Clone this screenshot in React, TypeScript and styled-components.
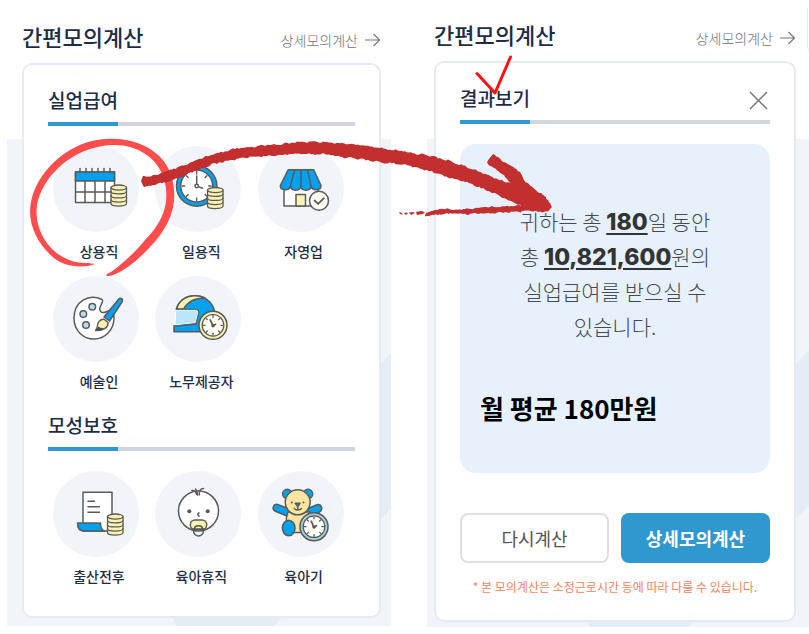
import React from "react";
import styled, { createGlobalStyle, css } from "styled-components";

const color = {
  navy: "#1c2d44",
  text: "#454a52",
  muted: "#737373",
  blue: "#2f98ce",
  track: "#d0d6dd",
  border: "#e5ebf3",
  backdrop: "#f1f5fa",
  band: "#e4edf5",
  result: "#e6f1fc",
  notice: "#f28560",
  brush: "#c32f2f",
  iconBlue: "#00a2f0",
  iconYellow: "#fbf2b2",
  iconLine: "#5a5a5a",
};

const GlobalStyle = createGlobalStyle`
  *, *::before, *::after { box-sizing: border-box; }
  body {
    margin: 0;
    background: #fff;
    color: ${color.text};
    font-family: "Noto Sans CJK KR", "Noto Sans", sans-serif;
  }
  h2, h3, p, ul { margin: 0; padding: 0; }
  button { font-family: inherit; padding: 0; cursor: pointer; }
`;

const Page = styled.main`
  position: relative;
  display: grid;
  grid-template-columns: 384fr 382fr;
  column-gap: 36px;
  align-items: start;
  min-height: 100vh;
  padding-left: 7px;
  overflow: hidden;
`;

const Panel = styled.section<{ $wide?: boolean }>`
  position: relative;
  overflow: hidden;
  padding: ${(p) => (p.$wide ? "19px 13px 5px 7px" : "21px 10px 8px 15px")};
  background: linear-gradient(#fff 139px, ${color.backdrop} 139px);

  &::before {
    content: "";
    position: absolute;
    left: ${(p) => (p.$wide ? "156px" : "162px")};
    bottom: -27px;
    width: 500px;
    height: 110px;
    border-radius: 55px;
    background: ${color.band};
    transform: rotate(-45deg);
    transform-origin: 55px 55px;
  }
`;

const PanelHead = styled.header`
  position: relative;
  display: flex;
  justify-content: space-between;
  align-items: flex-end;
  margin-bottom: 12px;
`;

const PanelTitle = styled.h2`
  font-size: 22px;
  line-height: 30px;
  font-weight: 500;
  color: ${color.navy};
`;

const DetailLink = styled.a`
  display: flex;
  align-items: center;
  gap: 6px;
  font-size: 14px;
  line-height: 22px;
  font-weight: 300;
  color: ${color.muted};
  text-decoration: none;
`;

const Card = styled.div<{ $bottom: number }>`
  position: relative;
  padding: 23px 24px ${(p) => p.$bottom}px;
  border: 2px solid ${color.border};
  border-radius: 10px;
  background: #fff;
`;

const SectionHead = styled.div<{ $spaced?: boolean }>`
  display: flex;
  justify-content: space-between;
  align-items: flex-start;
  margin-top: ${(p) => (p.$spaced ? "23px" : "0")};
  margin-bottom: 20px;
  background: linear-gradient(${color.track}, ${color.track}) bottom / 100% 4px no-repeat;
`;

const SectionTitle = styled.h3`
  padding-bottom: 10px;
  border-bottom: 4px solid ${color.blue};
  font-size: 19px;
  line-height: 24px;
  font-weight: 500;
  color: ${color.navy};
`;

const CloseButton = styled.button`
  display: flex;
  margin-top: 4px;
  border: 0;
  background: none;
`;

const JobGrid = styled.ul`
  display: grid;
  grid-template-columns: repeat(3, 1fr);
  row-gap: 16px;
  list-style: none;
`;

const JobButton = styled.button`
  display: flex;
  flex-direction: column;
  gap: 10px;
  width: 92px;
  margin-left: 5px;
  border: 0;
  background: none;
`;

const JobIcon = styled.svg`
  display: block;
  width: 86px;
  height: 86px;
  border-radius: 50%;
  background: ${color.backdrop};
`;

const JobLabel = styled.span`
  align-self: stretch;
  font-size: 14px;
  line-height: 18px;
  font-weight: 500;
  color: ${color.navy};
  text-align: center;
`;

const ResultBox = styled.div`
  padding: 60px 20px 45px;
  border-radius: 16px;
  background: ${color.result};
`;

const ResultText = styled.p`
  font-size: 21px;
  line-height: 35px;
  font-weight: 300;
  text-align: center;
`;

const Figure = styled.strong`
  font-family: Inter, sans-serif;
  font-size: 23px;
  line-height: 20px;
  font-weight: 800;
  color: #333;
  text-decoration: underline;
  text-decoration-thickness: 2px;
  text-underline-offset: 3px;
`;

const Average = styled.p`
  margin-top: 46px;
  margin-bottom: 2px;
  font-size: 26px;
  line-height: 36px;
  font-weight: 700;
  color: #000;
`;

const Actions = styled.div`
  display: grid;
  grid-template-columns: 1fr 1fr;
  column-gap: 12px;
  margin-top: 40px;
`;

const ActionButton = styled.button<{ $primary?: boolean }>`
  height: 50px;
  border-radius: 8px;
  font-size: 18px;
  ${(p) =>
    p.$primary
      ? css`
          border: 0;
          background: ${color.blue};
          color: #fff;
          font-weight: 700;
        `
      : css`
          border: 2px solid #dde1e7;
          background: #fff;
          color: #555;
          font-weight: 400;
        `}
`;

const Notice = styled.p`
  margin-top: 15px;
  font-size: 12px;
  line-height: 18px;
  color: ${color.notice};
  text-align: center;
  white-space: nowrap;
`;

const NextCardEdge = styled.div`
  position: absolute;
  top: 8px;
  right: -20px;
  width: 22px;
  height: 46px;
  border-left: 1px solid ${color.border};
  border-bottom: 1px solid ${color.border};
  border-bottom-left-radius: 8px;
`;

const Markup = styled.svg`
  position: absolute;
  top: 0;
  left: 0;
  pointer-events: none;
`;

const line = {
  stroke: color.iconLine,
  strokeWidth: 1.5,
  strokeLinejoin: "round" as const,
  strokeLinecap: "round" as const,
};

function Coins({ x, y }: { x: number; y: number }) {
  return (
    <g transform={`translate(${x} ${y})`} {...line} strokeWidth="1.3">
      <path d="M0 2.500v16c0 3.500 15.500 3.500 15.500 0v-16z" fill={color.iconYellow} />
      <ellipse cx="7.750" cy="2.600" rx="7.750" ry="2.600" fill={color.iconYellow} />
      <path d="M0 6.600c0 3 15.500 3 15.500 0M0 10.700c0 3 15.500 3 15.500 0M0 14.800c0 3 15.500 3 15.500 0" fill="none" />
    </g>
  );
}

function Dial({ x, y, ring }: { x: number; y: number; ring: string }) {
  return (
    <g transform={`translate(${x} ${y})`} {...line}>
      <circle r="14" fill={ring} />
      <circle r="10.8" fill="#fffdf4" strokeWidth="1.2" />
      {[0, 45, 90, 135, 180, 225, 270, 315].map((a) => (
        <path key={a} d="M0-9.8v1.8" transform={`rotate(${a})`} strokeWidth="1.3" />
      ))}
      <path d="M-2.8-5.5L0 .6L2.5-1" fill="none" strokeWidth="1.7" />
      <circle r="1" cy=".4" fill={color.iconLine} />
    </g>
  );
}

const icons: Record<string, React.ReactNode> = {
  calendar: (
    <>
      <path d="M22.500 26h39v30.500h-39z" fill="#fff" {...line} />
      <path d="M22.500 26h39v9h-39z" fill={color.iconBlue} {...line} />
      <path
        d="M32 35v21.500M42 35v21.500M52 35v21.500M23 46h38M27 22.500v4M33 22.500v4M39 22.500v4M45 22.500v4M51 22.500v4M57 22.500v4"
        fill="none"
        {...line}
      />
      <Coins x={58} y={39} />
    </>
  ),
  clock: (
    <>
      <circle cx="41.700" cy="40" r="20.200" fill={color.iconBlue} {...line} />
      <circle cx="41.700" cy="40" r="16" fill="#fff" {...line} />
      {[0, 45, 90, 135, 180, 225, 270, 315].map((a) => (
        <path key={a} d="M41.700 25.500v2.500" transform={`rotate(${a} 41.7 40)`} {...line} strokeWidth="1.3" />
      ))}
      <path d="M41.700 30v8.500M43.500 40.600l4 1.600" fill="none" {...line} />
      <circle cx="41.700" cy="40" r="1.700" fill="#fff" {...line} />
      <Coins x={52.5} y={41.5} />
    </>
  ),
  store: (
    <>
      <path d="M26 39h34v21H26z" fill="#fff" {...line} />
      <path d="M38 48.500h9.500V60H38z" fill={color.iconYellow} {...line} />
      <path
        d="M30.300 23.700h25.400L63 39.500c0 5.500-9 5.500-10 .5c0 5.500-10 5.500-10.300 0c-.3 5.500-10 5.500-10.200 0c-1 5-10.200 5-10.200-.5z"
        fill={color.iconBlue}
        {...line}
      />
      <path d="M36.700 23.700L32.500 40M43 23.700V40M49.300 23.700L53 40" fill="none" {...line} />
      <circle cx="61" cy="54.700" r="9.500" fill="#fffdf4" {...line} />
      <path d="M56.500 54.500l3.600 3.400l5.800-5.800" fill="none" {...line} strokeWidth="1.8" />
    </>
  ),
  palette: (
    <>
      <path
        d="M49 23.500C36 17.500 21 25 21 42c0 12.500 9 21 20 21s20-9 20-21c0-6-3-8.500-7-6.500c-6 3-9-1-6-6.500c1.500-3 2.500-4.500 1-5.500z"
        fill="#fff"
        {...line}
      />
      <g fill="#b5dff3" {...line}>
        <circle cx="39.300" cy="30.700" r="3.300" />
        <circle cx="30.300" cy="38" r="3.300" />
        <circle cx="33" cy="49" r="3.300" />
      </g>
      <path d="M65.800 23c1.800-1.800 4.800 0 3.200 3L56.500 45L51 41z" fill={color.iconBlue} {...line} />
      <path d="M51.500 43.500l3.500 3c.5 5-4.500 8-12.500 8c3-2 1-7 3.500-9c1.500-1.500 3.500-2.500 5.500-2z" fill={color.iconYellow} {...line} />
      <path d="M42 54.800c3-1.500 2.500-4.500 4-4c1 1.500 2.500.5 4.500 2c-2 1.500-5 2.200-8.500 2z" fill="#4d4d4d" />
    </>
  ),
  helmet: (
    <>
      <path
        d="M21.500 33C24 24 32 19.500 40.500 19.700C52 20 60 29 60 40v15.700H19V50l22-2l2.500-12z"
        fill={color.iconBlue}
        {...line}
      />
      <path d="M21.500 33C24 24 32 19.500 40.500 19.700c4 0 7 1 9.500 2.300c-9 0-17 3-21.500 11z" fill={color.iconYellow} {...line} />
      <path d="M20.700 34h19c3 0 3.500 1 3 4l-2.200 9l-20.500 2z" fill="#b9e7f8" stroke="#fff" strokeWidth="1" />
      <path d="M21 33.300h18.500c4 0 4.500 2 3.800 5l-2.300 9.200L19 50" fill="none" {...line} strokeWidth="1" />
      <Dial x={58} y={49.3} ring={color.iconYellow} />
    </>
  ),
  document: (
    <>
      <path d="M30 21.300h29V60H30z" fill="#fff" {...line} />
      <path d="M35 30.300h6.500M35 35.700h11.500M35 41.300h11.500" fill="none" {...line} />
      <path d="M24.500 52H47.500c0 4 1 7 4 8H31c-5 0-6.500-4-6.500-8z" fill={color.iconBlue} {...line} />
      <Coins x={54.5} y={43} />
    </>
  ),
  baby: (
    <>
      <circle cx="43.500" cy="40" r="20" fill="#fff" {...line} />
      <circle cx="34.300" cy="40.300" r="2" fill={color.iconLine} />
      <circle cx="52.700" cy="40.300" r="2" fill={color.iconLine} />
      <path
        d="M44 41.800c-1.500 1-1.500 2.500 0 3.500M37 19.500c2.500-.5 4 1 4.500 4M40.500 18c1.500 1.500 2 3.500 1.800 6M48.500 17.500c-3 0-4.500 2.500-4.300 6.500"
        fill="none"
        {...line}
      />
      <rect x="35.300" y="49" width="16.400" height="9.500" rx="4.700" fill={color.iconYellow} {...line} />
      <circle cx="43.500" cy="60" r="5" fill="none" {...line} />
      <path d="M39.500 58c0-4.500 8-4.500 8 0z" fill={color.iconYellow} {...line} />
    </>
  ),
  bear: (
    <>
      <g fill={color.iconBlue} {...line}>
        <circle cx="29.300" cy="23" r="4.700" />
        <circle cx="50" cy="23" r="4.700" />
        <path d="M19.500 33.500l12 4.500l-1.500 7.500l-13-5.500c-3.500-2-1.500-7.500 2.500-6.500z" />
        <path d="M59.500 33.500L48 38.500l2 6.500l11.500-4c4-2 2-8-2-7.500z" />
      </g>
      <path d="M30 41c-3 8-2 15 1 20.500h17l4-20.500z" fill="#fbe5a0" {...line} />
      <circle cx="39.700" cy="31.300" r="12.500" fill="#fbe5a0" {...line} />
      <circle cx="33.800" cy="31.500" r="1" fill={color.iconLine} />
      <circle cx="45.500" cy="31.500" r="1" fill={color.iconLine} />
      <path d="M37.300 32.300h4.800l-2.400 3.200z" fill={color.iconBlue} {...line} />
      <path d="M39.700 35.500v3M36.300 37.500c1 2 6 2 7 0" fill="none" {...line} />
      <ellipse cx="30.700" cy="57" rx="6.300" ry="7.700" fill={color.iconBlue} {...line} />
      <Dial x={56} y={55.7} ring="#9fd0de" />
    </>
  ),
};

type Job = { icon: string; label: string };

const unemployment: Job[] = [
  { icon: "calendar", label: "상용직" },
  { icon: "clock", label: "일용직" },
  { icon: "store", label: "자영업" },
  { icon: "palette", label: "예술인" },
  { icon: "helmet", label: "노무제공자" },
];

const maternity: Job[] = [
  { icon: "document", label: "출산전후" },
  { icon: "baby", label: "육아휴직" },
  { icon: "bear", label: "육아기" },
];

function JobList({ jobs }: { jobs: Job[] }) {
  return (
    <JobGrid>
      {jobs.map((job) => (
        <li key={job.label}>
          <JobButton type="button">
            <JobIcon viewBox="0 0 86 86" aria-hidden="true">
              {icons[job.icon]}
            </JobIcon>
            <JobLabel>{job.label}</JobLabel>
          </JobButton>
        </li>
      ))}
    </JobGrid>
  );
}

function Head() {
  return (
    <PanelHead>
      <PanelTitle>간편모의계산</PanelTitle>
      <DetailLink href="#detail">
        상세모의계산
        <svg width="17" height="14" viewBox="0 0 17 14" fill="none" stroke="#777" strokeWidth="1.2" aria-hidden="true">
          <path d="M1 7h14.500M9.500 1l6 6l-6 6" />
        </svg>
      </DetailLink>
    </PanelHead>
  );
}

type Point = [number, number];

/* Resamples a polyline every 2 units and roughens it like a dry brush edge. */
function roughen(points: Point[], amount: number, seed: number): Point[] {
  const out: Point[] = [];
  let n = seed;
  for (let i = 0; i < points.length - 1; i++) {
    const [ax, ay] = points[i];
    const [bx, by] = points[i + 1];
    const steps = Math.max(1, Math.round(Math.hypot(bx - ax, by - ay) / 2));
    for (let s = 0; s < steps; s++) {
      n += 1;
      const hash = Math.sin(n * 127.1) * 43758.5453;
      const noise = (hash - Math.floor(hash) - 0.5) * 1.5 + Math.sin(n * 0.9) * 0.4;
      const t = s / steps;
      out.push([ax + (bx - ax) * t, ay + (by - ay) * t + noise * amount]);
    }
  }
  out.push(points[points.length - 1]);
  return out;
}

function brushPath(top: Point[], bottom: Point[], amount: number) {
  const outline = [...roughen(top, amount, 3), ...roughen(bottom, amount, 41).reverse()];
  return "M" + outline.map(([x, y]) => `${x.toFixed(1)} ${y.toFixed(1)}`).join("L") + "Z";
}

const shaft = brushPath(
  [[141, 181], [143, 176], [149, 177], [158, 174], [170, 170], [185, 165], [200, 159], [213, 154], [227, 151], [237, 148], [250, 147], [267, 145], [282, 144], [297, 142], [323, 142], [350, 144], [380, 148], [407, 152], [430, 156], [450, 161], [467, 167], [483, 173], [500, 180], [523, 187], [545, 196], [552, 207]],
  [[141, 181], [144, 187], [149, 186], [158, 184], [170, 181], [185, 175], [200, 169], [213, 164], [227, 161], [250, 157], [267, 156], [297, 154], [323, 154], [350, 158], [380, 162], [407, 165], [430, 171], [450, 178], [467, 182], [483, 189], [500, 196], [518, 205], [534, 211], [548, 212], [552, 207]],
  1
);

const upperBarb = brushPath(
  [[487, 162], [493, 154], [503, 161], [513, 167], [520, 172], [524, 180], [535, 190], [546, 197]],
  [[487, 162], [489, 165], [497, 170], [504, 176], [510, 182], [515, 190], [526, 198], [546, 206]],
  0.9
);

const lowerBarb = brushPath(
  [[425, 215], [432, 211], [447, 208], [452, 210], [467, 209], [490, 207], [513, 206], [530, 205], [545, 205]],
  [[425, 216], [432, 215], [447, 214], [452, 213], [467, 214], [490, 213], [513, 212], [530, 211], [545, 210]],
  0.9
);

function Annotations() {
  return (
    <Markup width="809" height="634" viewBox="0 0 809 634" aria-hidden="true">
      <path
        fill="#ff4d4d"
        d="M95 264C82 269 62 267 50 254.500C36 241 27 222 31 202C36 175 62 148 92 141C125 133 160 146 170 172C180 200 172 224 150 247C140 258 125 271 113 275C108 277 105 276 107 274C112 273 135 253 145 240C165 220 170 200 164 179C156 153 128 140 98 147C68 153 42 178 37 205C33 235 56 264 88 263Z"
      />
      <g fill={color.brush}>
        <path d={shaft} />
        <path d={upperBarb} />
        <path d={lowerBarb} />
        <path d="M399 212l3 1l1 1.500l-3-.5zM404 213l3-.5l1 1.500l-3 .8zM409 212.500l4-.5l2 1l-4 2zM416 212l5-1l4 1l-2 2l-6 1zM426 213l6-2v4l-7 1z" />
      </g>
      <path
        d="M477 73.500L495 93L510.500 57"
        fill="none"
        stroke="#ff1015"
        strokeWidth="3"
        strokeLinecap="round"
        strokeLinejoin="round"
      />
    </Markup>
  );
}

export default function App() {
  return (
    <>
      <GlobalStyle />
      <Page>
        <Panel>
          <Head />
          <Card $bottom={31}>
            <SectionHead>
              <SectionTitle>실업급여</SectionTitle>
            </SectionHead>
            <JobList jobs={unemployment} />
            <SectionHead $spaced>
              <SectionTitle>모성보호</SectionTitle>
            </SectionHead>
            <JobList jobs={maternity} />
          </Card>
        </Panel>

        <Panel $wide>
          <Head />
          <Card $bottom={24}>
            <SectionHead>
              <SectionTitle>결과보기</SectionTitle>
              <CloseButton type="button" aria-label="닫기">
                <svg width="22" height="22" viewBox="0 0 22 22" stroke="#777" strokeWidth="1.5" aria-hidden="true">
                  <path d="M2 2l17 17M19 2L2 19" />
                </svg>
              </CloseButton>
            </SectionHead>
            <ResultBox>
              <ResultText>
                귀하는 총 <Figure>180</Figure>일 동안
                <br />총 <Figure>10,821,600</Figure>원의
                <br />
                실업급여를 받으실 수
                <br />
                있습니다.
              </ResultText>
              <Average>월 평균 180만원</Average>
            </ResultBox>
            <Actions>
              <ActionButton type="button">다시계산</ActionButton>
              <ActionButton type="button" $primary>
                상세모의계산
              </ActionButton>
            </Actions>
            <Notice>* 본 모의계산은 소정근로시간 등에 따라 다를 수 있습니다.</Notice>
          </Card>
        </Panel>
        <NextCardEdge />
        <Annotations />
      </Page>
    </>
  );
}
